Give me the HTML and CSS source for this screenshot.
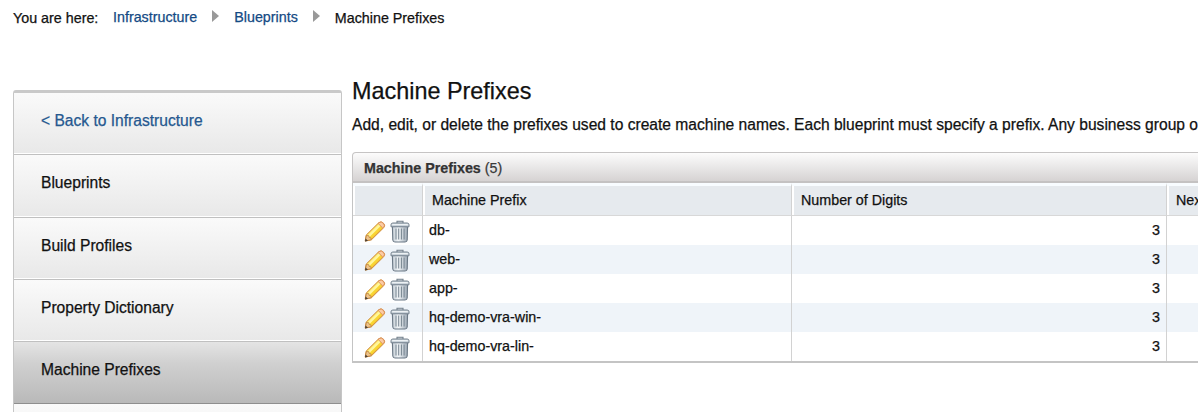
FILE: index.html
```
<!DOCTYPE html>
<html lang="en">
<head>
<meta charset="utf-8">
<title>Machine Prefixes</title>
<link rel="stylesheet" href="styles.css">
</head>
<body>
<svg class="defs" aria-hidden="true">
  <defs>
    <linearGradient id="wood" x1="0" y1="0" x2="1" y2="1">
      <stop offset="0.28" stop-color="#f0a22e"/><stop offset="0.42" stop-color="#fff27a"/><stop offset="0.55" stop-color="#fadb3c"/><stop offset="0.72" stop-color="#e58a1c"/>
    </linearGradient>
    <linearGradient id="steel" x1="0" y1="0" x2="1" y2="0">
      <stop offset="0" stop-color="#c3ccd4"/><stop offset="0.4" stop-color="#f3f6f8"/><stop offset="1" stop-color="#9ba7b3"/>
    </linearGradient>
    <symbol id="pencil" viewBox="0 0 22 22">
      <path d="M1.2 20.6 2.2 14.6 14.8 2.2Q17 .4 19.3 2.5 21.7 4.8 19.8 7.1L7.4 19.3Z" fill="url(#wood)" stroke="#cf8a35" stroke-width="1"  stroke-linejoin="round"/>
      <path d="M4.9 15.6 16 4.6" stroke="#fff6a0" stroke-width="2"/>
      <path d="M6.5 17 17.6 6" stroke="#f9d532" stroke-width="1.6"/>
      <path d="M14.2 3 15.2 2.1Q17.2.7 19.2 2.6 21.4 4.9 19.7 6.9L18.9 7.7Z" fill="#fbcba3" stroke="#d98a58" stroke-width=".9"/>
      <path d="M1.4 20.4 2.4 15 4.8 15.2 5.2 17 7 17.4 7.2 19.2Z" fill="#efc58d" stroke="#b87835" stroke-width=".7"/>
      <path d="M1 21 1.5 17.9 4 20.3Z" fill="#4a4038"/>
    </symbol>
    <symbol id="trash" viewBox="0 0 20 23">
      <path d="M2.4 6.5H17.6L17.2 20Q17 22 15 22H5Q3 22 2.8 20Z" fill="url(#steel)" stroke="#6b7885" stroke-width="1.1"/>
      <path d="M6 8.5V19.5M8.7 8.5V19.5M11.4 8.5V19.5M14.1 8.5V19.5" stroke="#75838f" stroke-width="1"/>
      <path d="M7 3.2V1.2H13V3.2" fill="#dce2e7" stroke="#74818d" stroke-width="1.1"/>
      <path d="M1 6.8V4.7Q1 3.1 2.8 3H17.2Q19 3.1 19 4.7V6.8Z" fill="#cbd4db" stroke="#74818d" stroke-width="1"/>
      <path d="M2.2 4.5H17.8" stroke="#edf1f4"/>
    </symbol>
  </defs>
</svg>
<nav class="breadcrumb">
  <span class="crumb-label">You are here:</span>
  <a class="crumb" href="#">Infrastructure</a>
  <span class="arrow"></span>
  <a class="crumb" href="#">Blueprints</a>
  <span class="arrow"></span>
  <span class="crumb-current">Machine Prefixes</span>
</nav>
<div class="page">
  <nav class="sidebar">
    <a class="side-item back" href="#">&lt; Back to Infrastructure</a>
    <a class="side-item" href="#">Blueprints</a>
    <a class="side-item" href="#">Build Profiles</a>
    <a class="side-item" href="#">Property Dictionary</a>
    <a class="side-item active" href="#">Machine Prefixes</a>
    <div class="side-item"></div>
  </nav>
  <main class="content">
    <h1 class="title">Machine Prefixes</h1>
    <p class="intro">Add, edit, or delete the prefixes used to create machine names. Each blueprint must specify a prefix. Any business group or</p>
    <section class="panel">
      <div class="panel-title"><b>Machine Prefixes</b> (5)</div>
      <div class="grid">
        <div class="row head"><div class="cell"></div><div class="cell">Machine Prefix</div><div class="cell">Number of Digits</div><div class="cell">Next</div></div>
        <div class="row"><div class="cell icons"><svg class="pencil"><use href="#pencil"/></svg><svg class="trash"><use href="#trash"/></svg></div><div class="cell">db-</div><div class="cell num">3</div><div class="cell"></div></div>
        <div class="row alt"><div class="cell icons"><svg class="pencil"><use href="#pencil"/></svg><svg class="trash"><use href="#trash"/></svg></div><div class="cell">web-</div><div class="cell num">3</div><div class="cell"></div></div>
        <div class="row"><div class="cell icons"><svg class="pencil"><use href="#pencil"/></svg><svg class="trash"><use href="#trash"/></svg></div><div class="cell">app-</div><div class="cell num">3</div><div class="cell"></div></div>
        <div class="row alt"><div class="cell icons"><svg class="pencil"><use href="#pencil"/></svg><svg class="trash"><use href="#trash"/></svg></div><div class="cell">hq-demo-vra-win-</div><div class="cell num">3</div><div class="cell"></div></div>
        <div class="row"><div class="cell icons"><svg class="pencil"><use href="#pencil"/></svg><svg class="trash"><use href="#trash"/></svg></div><div class="cell">hq-demo-vra-lin-</div><div class="cell num">3</div><div class="cell"></div></div>
      </div>
    </section>
  </main>
</div>
</body>
</html>
```
FILE: styles.css
```
* { box-sizing: border-box; }
html, body { height: 100%; }
body {
  margin: 0;
  overflow: hidden;
  background: #fff;
  color: #111;
  font-family: "Liberation Sans", Arial, sans-serif;
  font-size: 14.3px;
  -webkit-text-stroke: 0.25px currentColor;
}
a { text-decoration: none; }
.defs { display: block; width: 0; height: 0; }
.breadcrumb {
  display: flex;
  height: 78px;
  padding: 8px 0 0 13px;
  line-height: 18px;
  white-space: nowrap;
}
.crumb-label { width: 100px; padding-top: 1px; }
.crumb { color: #144a84; }
.arrow {
  width: 0;
  height: 12px;
  margin: 2px 15px 0 15px;
  border-left: 7px solid #999;
  border-top: 6px solid transparent;
  border-bottom: 6px solid transparent;
}
.crumb-current { padding-top: 1px; }
.page { display: flex; height: 334px; overflow: hidden; padding-left: 13px; }
.sidebar {
  flex: none;
  width: 329px;
  height: 400px;
  margin-top: 12px;
  border: 1px solid #c6c6c6;
  border-top: 3px solid #c9c9c9;
  border-radius: 3px 3px 0 0;
  background: #eee;
}
.side-item {
  display: flex;
  align-items: center;
  height: 62.3px;
  padding: 0 0 5px 27px;
  border-bottom: 1px solid #c0c0c0;
  box-shadow: inset 0 -1px #fff;
  background: linear-gradient(#fafafa, #e8e8e8);
  color: #111;
  font-size: 15.6px;
}
.side-item.back { color: #25588f; }
.side-item.active {
  background: linear-gradient(#e4e4e4, #d0d0d0 35%, #b9b9b9);
  border-bottom-color: #8e8e8e;
  box-shadow: none;
}
.content { flex: none; width: 1000px; padding-left: 10px; }
.title {
  height: 25px;
  margin: 0;
  font-size: 23.4px;
  font-weight: 400;
  line-height: 26px;
}
.intro {
  height: 20px;
  margin: 11px 0 18px;
  font-size: 15.6px;
  line-height: 21px;
  white-space: nowrap;
}
.panel-title {
  height: 31px;
  padding-left: 11px;
  border: 1px solid #c6c4c4;
  border-bottom: 2px solid #c4c2c2;
  border-radius: 4px 0 0 0;
  background: linear-gradient(#fcfcfc, #d6d3d3);
  color: #3a3a3a;
  line-height: 30px;
}
.panel-title b { color: #333; }
.grid {
  border-left: 1.5px solid #c4c4c4;
  border-bottom: 2px solid #c4c4c4;
}
.row {
  display: grid;
  grid-template-columns: 70px 369px 375px 180px;
  height: 29px;
}
.alt { background: #eff4f9; }
.cell {
  padding-left: 6px;
  border-right: 1px solid #d2d2d2;
  line-height: 29px;
}
.num { padding-right: 6px; text-align: right; }
.head { height: 33px; }
.head .cell {
  padding: 0 0 0 9px;
  border-top: 3px solid #f8fcff;
  border-bottom: 1px solid #d8d8d8;
  background: #e6eaee;
  box-shadow: inset 2px 0 #fff;
  line-height: 28px;
}
.cell.icons { display: flex; align-items: flex-start; gap: 4px; padding: 4px 0 0 11px; }
.pencil { width: 22px; height: 23px; }
.trash { width: 20px; height: 23px; }
```
